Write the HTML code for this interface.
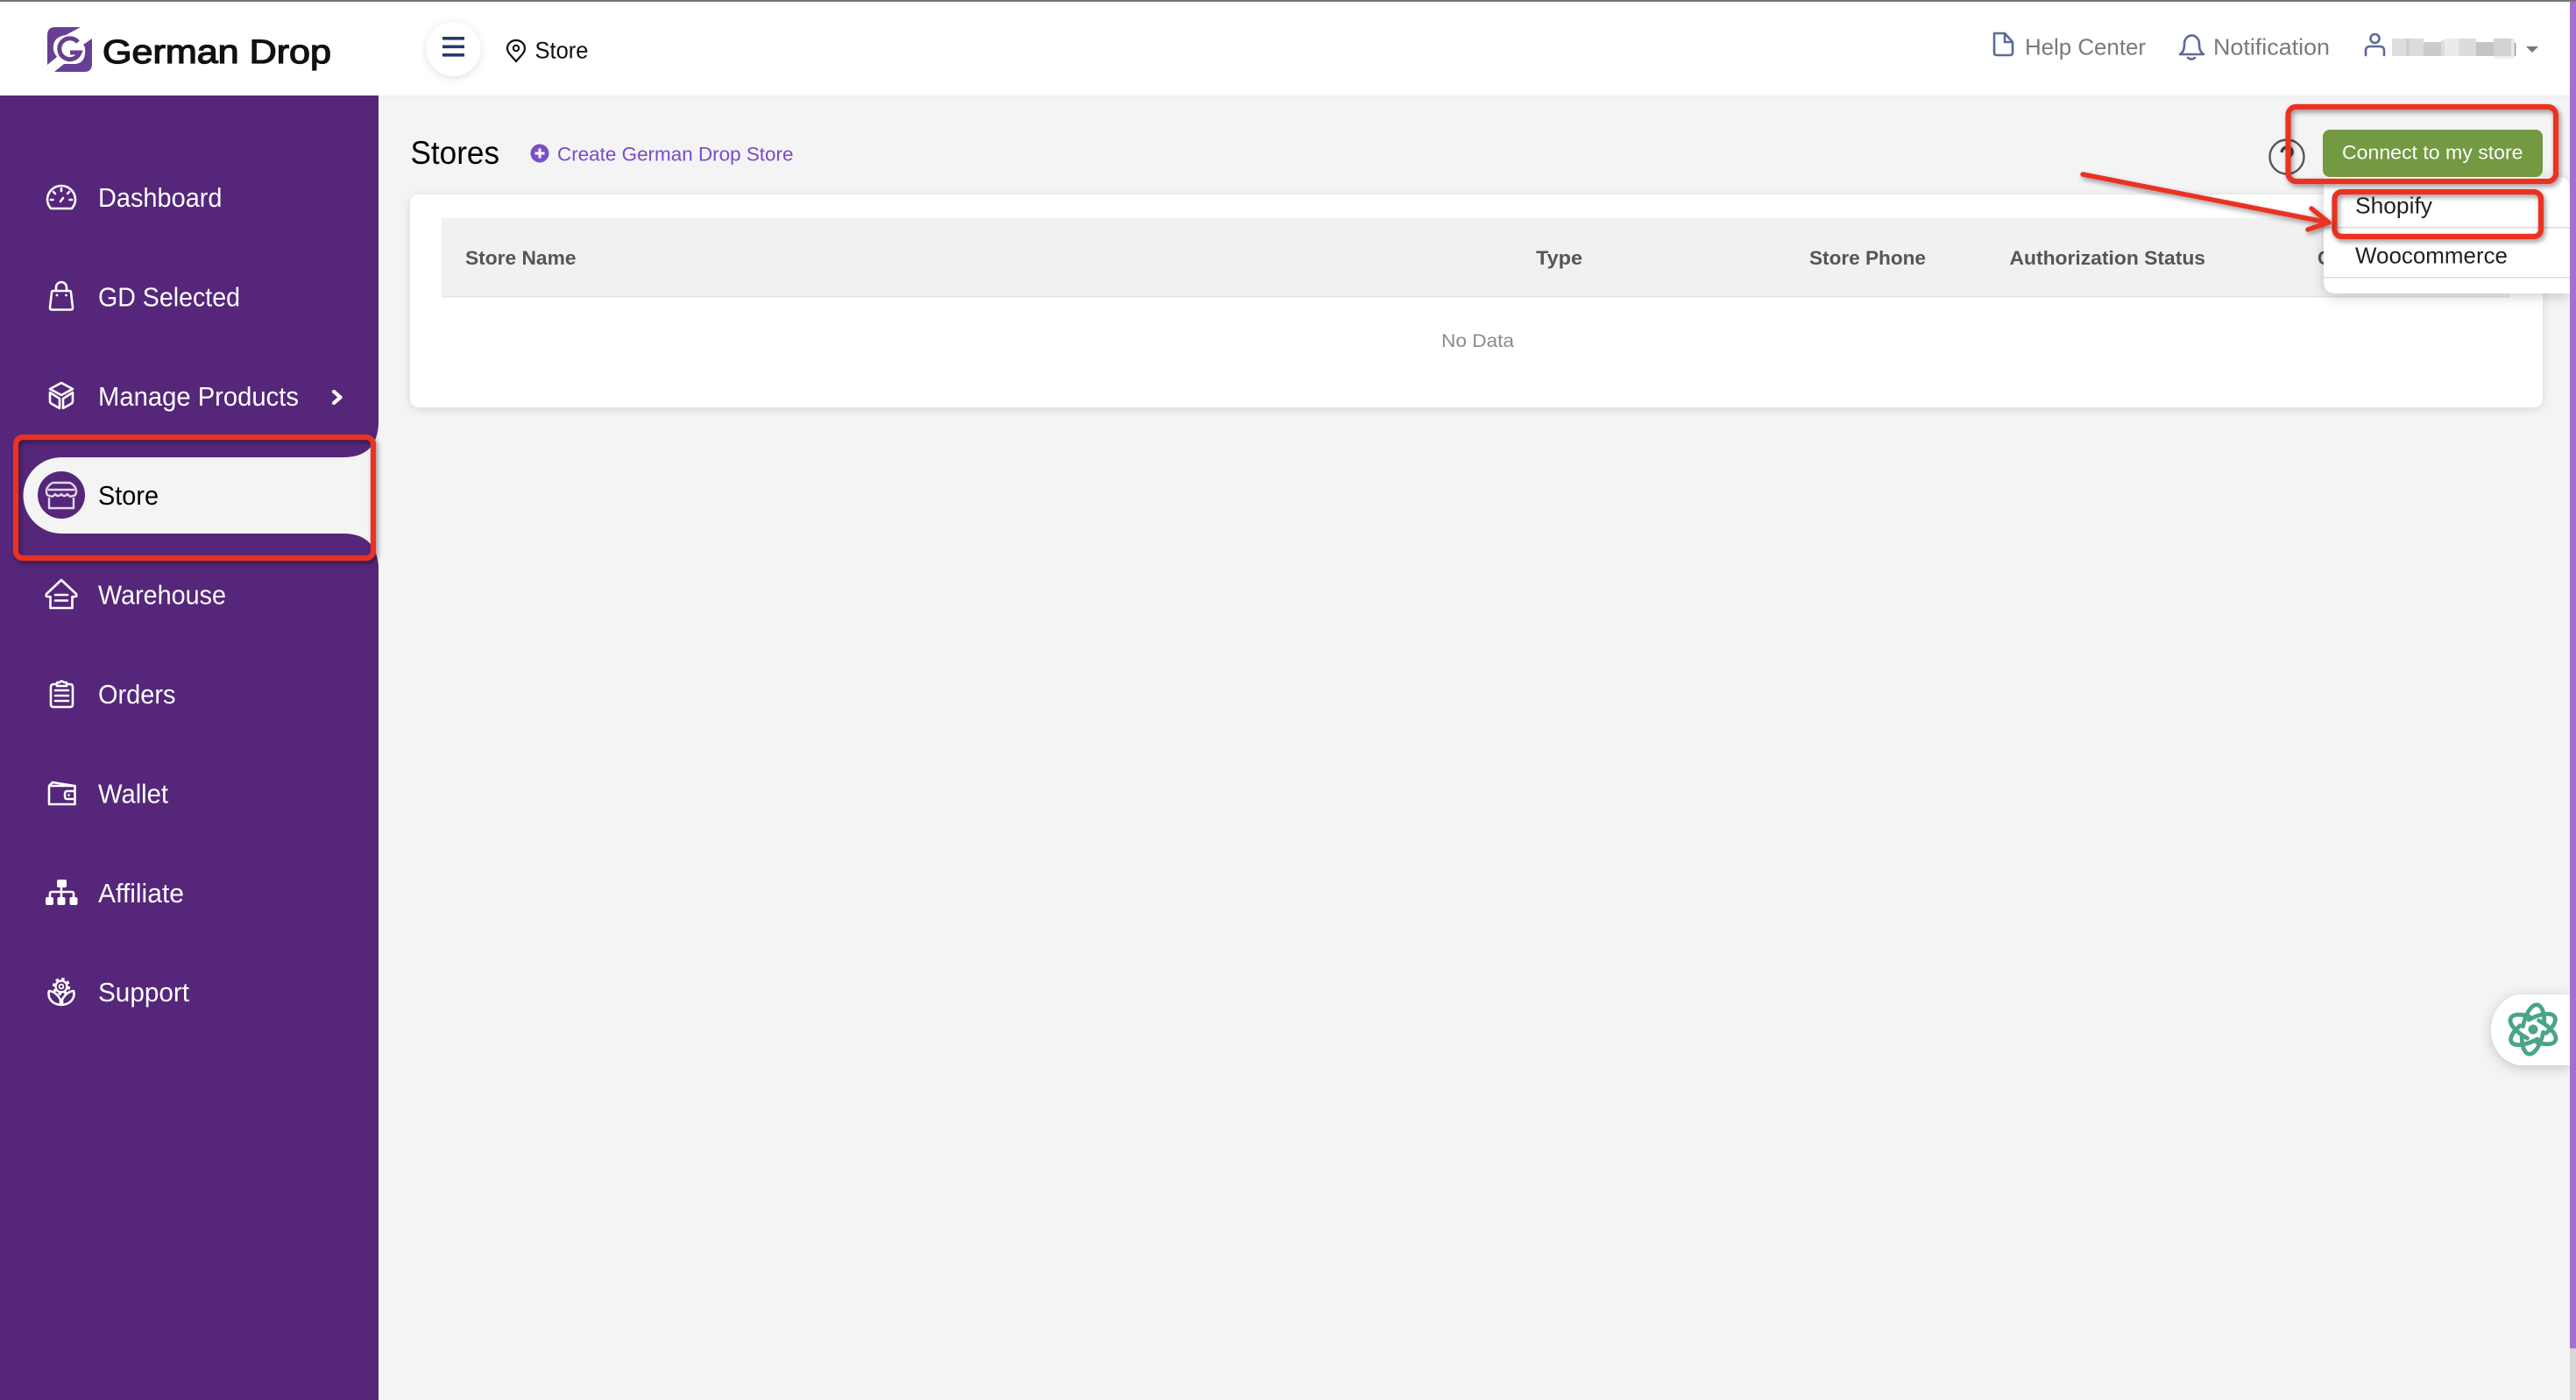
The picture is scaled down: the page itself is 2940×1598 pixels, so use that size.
<!DOCTYPE html>
<html lang="en">
<head>
<meta charset="utf-8">
<title>Stores - German Drop</title>
<style>
html,body{margin:0;padding:0;width:2940px;height:1598px;overflow:hidden;background:#f4f4f4}
svg{display:block}
text{font-family:"Liberation Sans",sans-serif;white-space:pre}
.nav{font-size:30.5px;fill:#fff}
.th{font-size:22px;font-weight:bold;fill:#555}
.top{font-size:26px;fill:#7a7a7a}
.ic{fill:none;stroke:#fff;stroke-width:2.6;stroke-linecap:round;stroke-linejoin:round}
.red{fill:none;stroke:#ea3323;stroke-width:6.2}
.tb{fill:none;stroke:#5b6b97;stroke-width:2.6;stroke-linecap:round;stroke-linejoin:round}
</style>
</head>
<body>
<svg width="2940" height="1598" viewBox="0 0 2940 1598" xmlns="http://www.w3.org/2000/svg">
<defs>
<filter id="sh" x="-10%" y="-20%" width="120%" height="140%"><feDropShadow dx="0" dy="2" stdDeviation="5" flood-color="#000" flood-opacity=".12"/></filter>
<filter id="sh2" x="-30%" y="-30%" width="160%" height="160%"><feDropShadow dx="0" dy="3" stdDeviation="7" flood-color="#000" flood-opacity=".2"/></filter>
<filter id="rs" x="-5%" y="-20%" width="110%" height="140%"><feDropShadow dx="2" dy="3" stdDeviation="3" flood-color="#000" flood-opacity=".4"/></filter>
</defs>

<rect width="2940" height="1598" fill="#f4f4f4"/>

<!-- header -->
<rect x="0" y="0" width="2940" height="109" fill="#fff"/>
<rect x="432" y="109" width="2501" height="5" fill="#f1f1f1"/>
<rect x="0" y="0" width="2940" height="2" fill="#777"/>

<!-- logo -->
<path fill="#673f92" d="M92 31H63Q54 31 54 40V74L65 65Q60 59 61 52Q62 42 75 40Z"/>
<path fill="#673f92" d="M105 44V73Q105 82 96 82H62L73 73H86Q96 72 97 61Q98 54 95 51Z"/>
<path fill="none" stroke="#673f92" stroke-width="5" d="M89 48A12 12 0 1 0 91 60H80"/>
<text x="117" y="72" font-size="38" fill="#111" stroke="#111" stroke-width="1.300" textLength="261" lengthAdjust="spacingAndGlyphs">German Drop</text>

<!-- hamburger -->
<circle cx="517.5" cy="56" r="31" fill="#fff" filter="url(#sh)"/>
<rect x="505" y="42" width="25" height="3.6" fill="#24386c"/>
<rect x="505" y="51.5" width="25" height="3.6" fill="#24386c"/>
<rect x="505" y="61" width="25" height="3.6" fill="#24386c"/>

<!-- breadcrumb -->
<path fill="none" stroke="#111" stroke-width="2.2" d="M589 70C583 63 579 60 579 55A10 9 0 0 1 599 55C599 60 595 63 589 70Z"/>
<circle cx="589" cy="55" r="3.2" fill="none" stroke="#111" stroke-width="2"/>
<text x="610.500" y="66.500" font-size="26.500" fill="#111" textLength="61" lengthAdjust="spacingAndGlyphs">Store</text>

<!-- header right -->
<path class="tb" d="M2276 38H2288L2297 48V60Q2297 63 2294 63H2279Q2276 63 2276 60ZM2288 38V48H2297"/>
<text class="top" x="2311" y="62.5" textLength="138" lengthAdjust="spacingAndGlyphs">Help Center</text>
<path class="tb" d="M2488 62C2492 59 2493 56 2493 50A8 9 0 0 1 2510 50C2510 56 2511 59 2515 62ZM2497 66Q2501 69 2505 66"/>
<text class="top" x="2526" y="62.5" textLength="133" lengthAdjust="spacingAndGlyphs">Notification</text>
<circle cx="2710.5" cy="44" r="5" class="tb"/>
<path class="tb" d="M2700 63V58Q2700 53 2705 53H2716Q2721 53 2721 58V63"/>
<g>
<rect x="2730" y="44" width="16" height="20" fill="#dedede"/>
<rect x="2746" y="44" width="4" height="20" fill="#cfcfcf"/>
<rect x="2750" y="44" width="16" height="20" fill="#dcdcdc"/>
<rect x="2766" y="48" width="20" height="16" fill="#cbcbcb"/>
<rect x="2786" y="46" width="4" height="18" fill="#ddd"/>
<rect x="2790" y="44" width="16" height="20" fill="#ebebeb"/>
<rect x="2806" y="44" width="4" height="20" fill="#ddd"/>
<rect x="2810" y="44" width="16" height="20" fill="#dcdcdc"/>
<rect x="2826" y="48" width="20" height="16" fill="#c4c4c4"/>
<rect x="2846" y="44" width="20" height="20" fill="#d2d2d2"/>
<rect x="2846" y="64" width="24" height="3" fill="#f0f0f0"/>
<rect x="2866" y="44" width="4" height="20" fill="#e8e8e8"/>
<rect x="2870" y="49" width="1.2" height="15" fill="#888"/>
</g>
<path d="M2883 53H2897L2890 60Z" fill="#777"/>

<!-- sidebar -->
<path fill="#55267a" d="M0 109H432V1598H0Z"/>
<path fill="#f4f4f4" d="M432 484Q430 522 392 522H70A43.5 43.5 0 0 0 70 609H392Q428 609 432 645Z"/>

<text class="nav" x="112" y="236" textLength="141.500" lengthAdjust="spacingAndGlyphs">Dashboard</text>
<text class="nav" x="112" y="349.5" textLength="162" lengthAdjust="spacingAndGlyphs">GD Selected</text>
<text class="nav" x="112" y="463" textLength="229" lengthAdjust="spacingAndGlyphs">Manage Products</text>
<text class="nav" x="112" y="576" style="fill:#000" textLength="69" lengthAdjust="spacingAndGlyphs">Store</text>
<text class="nav" x="112" y="689.5" textLength="146" lengthAdjust="spacingAndGlyphs">Warehouse</text>
<text class="nav" x="112" y="803" textLength="88.500" lengthAdjust="spacingAndGlyphs">Orders</text>
<text class="nav" x="112" y="916.5" textLength="80" lengthAdjust="spacingAndGlyphs">Wallet</text>
<text class="nav" x="112" y="1030" textLength="98" lengthAdjust="spacingAndGlyphs">Affiliate</text>
<text class="nav" x="112" y="1143" textLength="104" lengthAdjust="spacingAndGlyphs">Support</text>

<!-- dashboard icon -->
<path class="ic" d="M58 238Q54 233 54 228A16 16 0 0 1 86 228Q86 233 82 238Z"/>
<path class="ic" d="M70 215V218M61 219L63 221M79 219L77 221M58 228H60.5M79.5 228H82M69 230L72 226"/>
<!-- bag icon -->
<path class="ic" d="M60.5 332H79.5Q81 332 81 334L83 351Q83 353.500 81 353.500H59Q57 353.500 57 351L59 334Q59 332 60.500 332Z"/>
<path class="ic" d="M64 332V328A6 6 0 0 1 76 328V332"/>
<circle cx="65" cy="337" r="1.4" fill="#fff"/><circle cx="75.500" cy="337" r="1.400" fill="#fff"/>
<!-- box icon -->
<path class="ic" d="M70 437L83 444L70 451L57 444ZM57 448V458Q57 460 59 461L68 466V455ZM83 448V458Q83 460 81 461L72 466V455Z"/>
<!-- chevron -->
<path d="M381 447L388.500 453.500L381 460" fill="none" stroke="#fff" stroke-width="4.200" stroke-linecap="round" stroke-linejoin="round"/>
<!-- store icon -->
<circle cx="70" cy="565" r="27" fill="#55267a"/>
<path fill="none" stroke="#e2d8ea" stroke-width="2.400" stroke-linejoin="round" d="M60 551H80Q87 555 87 561Q87 566 83 566Q80 568 77 564Q73 568 70 564Q66 568 63 564Q60 568 57 566Q53 566 53 561Q53 555 60 551ZM55 559H85M56 568V580H84V568"/>
<!-- house icon -->
<path class="ic" d="M70 662L53 678Q52 681 54 681H57.500V694H82.500V681H86Q88 681 87 678ZM63 679H77M63 685.500H77"/>
<!-- clipboard icon -->
<path class="ic" d="M65 781H61Q58 781 58 784V804Q58 807 61 807H80Q83 807 83 804V784Q83 781 80 781H76M65 783V779H68Q70 776 73 779H76V783ZM63 788H78M63 794H78M63 800H78"/>
<!-- wallet icon -->
<path class="ic" d="M56 918V897H85.500V918ZM56 897L60 893L85 897M85.500 903H76Q74 903 74 907.500Q74 912 76 912H85.500"/>
<circle cx="78.500" cy="907.500" r="1.300" fill="#fff"/>
<!-- affiliate icon -->
<rect x="65" y="1004" width="11" height="9" rx="2" fill="#fff"/>
<rect x="52" y="1024" width="9" height="9" rx="2" fill="#fff"/>
<rect x="65.500" y="1024" width="9" height="9" rx="2" fill="#fff"/>
<rect x="79.500" y="1024" width="9" height="9" rx="2" fill="#fff"/>
<path class="ic" d="M70 1013V1024M57 1024V1020Q57 1018 59 1018H82Q84 1018 84 1020V1024"/>
<!-- support icon -->
<circle cx="70" cy="1126" r="6.500" fill="none" stroke="#fff" stroke-width="2.400"/>
<circle cx="70" cy="1126" r="8.800" fill="none" stroke="#fff" stroke-width="2.600" stroke-dasharray="3.500 3.400"/>
<circle cx="70" cy="1126" r="2.400" fill="none" stroke="#fff" stroke-width="1.800"/>
<path class="ic" d="M56 1131Q64 1132 69 1141V1147Q59 1146 56 1138Q55 1134 56 1131ZM84 1131Q76 1132 71 1141V1147Q81 1146 84 1138Q85 1134 84 1131Z"/>

<!-- red outline around sidebar item -->
<rect class="red" x="18" y="499" width="408" height="138" rx="8" filter="url(#rs)"/>

<!-- page title -->
<text x="468.500" y="187" font-size="37" fill="#000" textLength="101.500" lengthAdjust="spacingAndGlyphs">Stores</text>
<circle cx="616" cy="175" r="10.500" fill="#7b4fc9"/>
<path d="M616 169.500V180.500M610.500 175H621.500" stroke="#fff" stroke-width="3" fill="none"/>
<text x="636" y="183.500" font-size="22.500" fill="#7a4bc8" textLength="269.500" lengthAdjust="spacingAndGlyphs">Create German Drop Store</text>

<!-- card -->
<rect x="468" y="222" width="2434" height="243" rx="10" fill="#fff" filter="url(#sh)"/>
<rect x="504" y="249" width="2361" height="89" fill="#f1f1f1"/>
<rect x="504" y="338" width="2361" height="1.500" fill="#e6e6e6"/>
<text class="th" x="531" y="302" textLength="126.500" lengthAdjust="spacingAndGlyphs">Store Name</text>
<text class="th" x="1753" y="302" textLength="53" lengthAdjust="spacingAndGlyphs">Type</text>
<text class="th" x="2065" y="302" textLength="133" lengthAdjust="spacingAndGlyphs">Store Phone</text>
<text class="th" x="2293.500" y="302" textLength="223.500" lengthAdjust="spacingAndGlyphs">Authorization Status</text>
<text class="th" x="2645" y="302">C</text>
<text x="1645" y="396" font-size="21" fill="#8a8a8a" textLength="83" lengthAdjust="spacingAndGlyphs">No Data</text>

<!-- help circle -->
<circle cx="2610" cy="179" r="19.500" fill="none" stroke="#555" stroke-width="2.400"/>
<path d="M2604 174Q2605 168 2611 168Q2617 169 2616 175Q2615 178 2611 180V184M2611 187V190" fill="none" stroke="#444" stroke-width="3.400"/>

<!-- dropdown -->
<path d="M2652 202H2920Q2933 202 2933 215V335H2666Q2652 335 2652 321Z" fill="#fff" filter="url(#sh2)"/>
<rect x="2652" y="259" width="281" height="1.500" fill="#dcdcdc"/>
<rect x="2652" y="316" width="281" height="1.500" fill="#dcdcdc"/>
<text x="2688" y="243.500" font-size="26" fill="#222" textLength="88" lengthAdjust="spacingAndGlyphs">Shopify</text>
<text x="2688" y="300.500" font-size="26" fill="#222" textLength="174" lengthAdjust="spacingAndGlyphs">Woocommerce</text>

<!-- connect button -->
<rect x="2651" y="148" width="251" height="54" rx="8" fill="#739942"/>
<text x="2673" y="181.500" font-size="22.500" fill="#fff" textLength="206.500" lengthAdjust="spacingAndGlyphs">Connect to my store</text>

<!-- annotations -->
<rect class="red" x="2611.500" y="122" width="305.500" height="85" rx="9" filter="url(#rs)"/>
<rect class="red" x="2664.500" y="219" width="235.500" height="51" rx="8" filter="url(#rs)"/>
<g filter="url(#rs)" fill="none" stroke="#ea3323" stroke-linecap="round" stroke-linejoin="round">
<path stroke-width="5.500" d="M2377 199L2655 253.500"/>
<path stroke-width="5.500" d="M2638 238L2658 254L2634 262"/>
</g>

<!-- chat widget -->
<path d="M2933 1135H2879A36 40.500 0 0 0 2879 1216H2933Z" fill="#fff" filter="url(#sh2)"/>
<g fill="none" stroke="#4aa585" stroke-width="4.800" stroke-linecap="round">
<ellipse cx="2891" cy="1175" rx="28.500" ry="12" transform="rotate(100 2891 1175)" pathLength="100" stroke-dasharray="41 9" stroke-dashoffset="24"/>
<ellipse cx="2891" cy="1175" rx="28.500" ry="12" transform="rotate(27 2891 1175)" pathLength="100" stroke-dasharray="41 9" stroke-dashoffset="24"/>
<ellipse cx="2891" cy="1175" rx="28.500" ry="12" transform="rotate(-30 2891 1175)" pathLength="100" stroke-dasharray="41 9" stroke-dashoffset="24"/>
</g>
<circle cx="2891" cy="1175" r="5.500" fill="#4aa585"/>

<!-- scrollbar -->
<rect x="2933" y="2" width="7" height="1537" fill="#a56fd0"/>
<rect x="2933" y="1539" width="7" height="59" fill="#d6d6d6"/>
</svg>
</body>
</html>
